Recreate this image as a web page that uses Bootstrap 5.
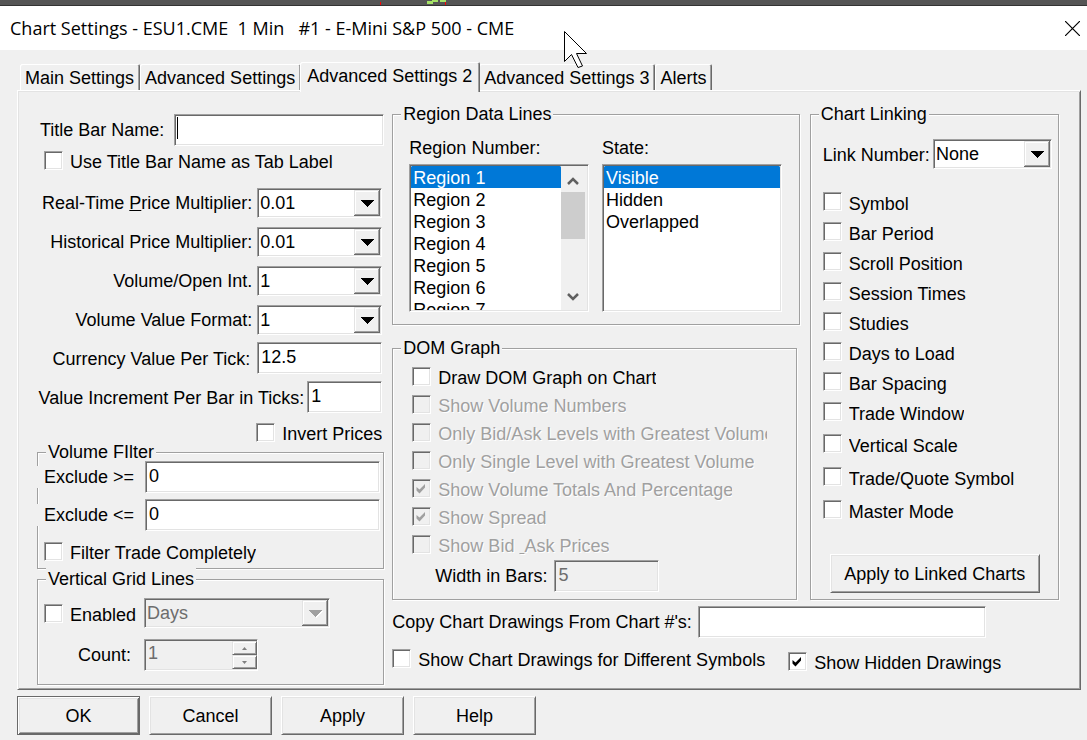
<!DOCTYPE html>
<html lang="en">
<head>
<meta charset="utf-8">
<meta name="viewport" content="width=device-width, initial-scale=1">
<title>Chart Settings</title>
<link href="https://cdn.jsdelivr.net/npm/bootstrap@5.3.0/dist/css/bootstrap.min.css" rel="stylesheet">
<script src="https://cdn.jsdelivr.net/npm/bootstrap@5.3.0/dist/js/bootstrap.bundle.min.js"></script>
<style>
  :root { --face: #f0f0f0; --lite: #e3e3e3; --shade: #a0a0a0; --dark: #696969; }
  body { background: var(--face); color: #000; font: 18px/22px "Liberation Sans", Arial, sans-serif; min-height: 100vh; }
  label, legend, button { white-space: nowrap; }

  /* window chrome */
  .backdrop-strip { height: 6px; background: #555; border-bottom: 1px solid #333; }
  .backdrop-strip svg { display: block; margin-left: 380px; }
  .title-bar { height: 44px; background: #fff; padding: 0 7px 0 10px; }
  .title-bar h1 { font: 18px/44px "Open Sans", sans-serif; white-space: pre; }
  .close-btn { border: 0; background: none; padding: 0; line-height: 0; }
  .pointer { left: 51.9%; top: 30px; z-index: 5; }
  .dialog { padding: 12px 6px 6px 17px; }

  /* tabs */
  .tab-strip { padding-left: 3px; }
  .tab-btn { background: var(--face); border: 0; height: 26px; padding: 2px 6px 0 5px; line-height: 22px;
    border-radius: 2px 2px 0 0; box-shadow: inset 1px 1px #fff, inset -1px 0 var(--dark), inset -2px 0 var(--shade); }
  .tab-btn.active { position: relative; z-index: 1; height: 30px; margin: 0 -1px -2px; padding: 3px 8px 5px 7px; }
  .panel { border: 1px solid; border-color: #fff var(--dark) var(--dark) #fff; padding: 12px 21px 4px 19px;
    box-shadow: inset 1px 1px var(--lite), inset -1px -1px var(--shade); }
  .settings-grid { display: grid; grid-template-columns: minmax(0, 347fr) minmax(0, 407fr) minmax(0, 251fr); grid-template-rows: auto 1fr; column-gap: 8px; }
  .col-left { grid-row: 1 / 3; padding-top: 11px; }
  .col-foot { grid-column: 2 / 4; }

  /* etched group boxes */
  .group { border: 1px solid var(--shade); box-shadow: inset 1px 1px #fff, 1px 1px #fff; }
  .group legend { float: none; width: auto; margin: 0 0 0 8px; padding: 0 2px; font-size: 18px; line-height: 22px; background: var(--face); }
  .col-left .group { margin-top: -1px; }

  /* sunken fields */
  .field { font: inherit; color: #000; background-color: #fff; border: 1px solid; border-color: var(--shade) #fff #fff var(--shade);
    border-radius: 0; box-shadow: inset 1px 1px var(--dark), inset -1px -1px var(--lite); min-width: 0; outline: 0; }
  input.field { height: 32px; padding: 3px 3px 5px; }
  .field:disabled, .field.off { background-color: var(--face); color: #6d6d6d; opacity: 1; }
  .caret-shown { background-image: linear-gradient(#000, #000); background-repeat: no-repeat; background-size: 1px 22px; background-position: 2px 2px; }
  .drop { appearance: none; height: 30px; padding: 1px 30px 1px 2px; background-repeat: no-repeat; background-position: right 1px center;
    background-image: url("data:image/svg+xml,%3Csvg xmlns='http://www.w3.org/2000/svg' width='26' height='26' shape-rendering='crispEdges'%3E%3Cpath fill='%23696969' d='M0 0h26v26H0z'/%3E%3Cpath fill='%23e3e3e3' d='M0 0h25v25H0z'/%3E%3Cpath fill='%23a0a0a0' d='M1 1h24v24H1z'/%3E%3Cpath fill='%23fff' d='M1 1h23v23H1z'/%3E%3Cpath fill='%23f0f0f0' d='M2 2h22v22H2z'/%3E%3Cpath d='M7 10h13l-6.500 7z'/%3E%3C/svg%3E"); }
  .drop:disabled { background-image: url("data:image/svg+xml,%3Csvg xmlns='http://www.w3.org/2000/svg' width='26' height='26' shape-rendering='crispEdges'%3E%3Cpath fill='%23696969' d='M0 0h26v26H0z'/%3E%3Cpath fill='%23e3e3e3' d='M0 0h25v25H0z'/%3E%3Cpath fill='%23a0a0a0' d='M1 1h24v24H1z'/%3E%3Cpath fill='%23fff' d='M1 1h23v23H1z'/%3E%3Cpath fill='%23f0f0f0' d='M2 2h22v22H2z'/%3E%3Cpath fill='%23fff' d='M8 11h13l-6.500 7z'/%3E%3Cpath fill='%23a0a0a0' d='M7 10h13l-6.500 7z'/%3E%3C/svg%3E"); }

  /* check boxes */
  .tick { height: 19px; line-height: 22px; gap: 7px; display: flex; align-items: flex-start; }
  .tick input { appearance: none; flex: none; width: 19px; height: 19px; margin: 0; background: #fff left top/18px no-repeat; border: 1px solid;
    border-color: var(--shade) #fff #fff var(--shade); box-shadow: inset 1px 1px var(--dark), inset -1px -1px var(--lite); }
  .tick input:checked { background-image: url("data:image/svg+xml,%3Csvg xmlns='http://www.w3.org/2000/svg' width='18' height='18'%3E%3Cpath d='M3.500 7v3.500L6.500 13.500l5.500-6V4L6.500 9.500z'/%3E%3C/svg%3E"); }
  .tick input:disabled { background-color: var(--face); }
  .tick input:disabled:checked { background-image: url("data:image/svg+xml,%3Csvg xmlns='http://www.w3.org/2000/svg' width='18' height='18'%3E%3Cpath fill='%23a0a0a0' d='M3.500 7v3.500L6.500 13.500l5.500-6V4L6.500 9.500z'/%3E%3C/svg%3E"); }
  .tick input:disabled + label { color: var(--shade); text-shadow: 1px 1px #fff; }
  .tick label { overflow: hidden; }

  /* raised buttons */
  .push { background: var(--face); border: 1px solid; border-color: #fff var(--dark) var(--dark) #fff; border-radius: 0; color: #000;
    box-shadow: inset 1px 1px var(--lite), inset -1px -1px var(--shade); height: 39px; padding: 0; }
  .push.default { border-color: var(--dark); box-shadow: inset 1px 1px #fff, inset -1px -1px var(--dark), inset 2px 2px var(--lite), inset -2px -2px var(--shade); }
  .actions { gap: 9px; padding-top: 6px; }
  .actions .push { width: 123px; }

  /* left column */
  .title-row { gap: 10px; }
  .title-field { width: 210px; }
  .as-tab { margin: 5px 0 0 7px; }
  .num-rows { gap: 9px; margin-top: 18px; padding-right: 2px; }
  .num-rows > div, .value-rows > div { display: flex; justify-content: flex-end; align-items: center; gap: 5px; }
  .value-rows { gap: 7px; margin-top: 7px; padding-right: 2px; }
  .value-rows > div { gap: 3px; }
  .value-rows label { padding-top: 2px; }
  .w-num { width: 125px; }
  .w-short { width: 75px; }
  .invert-row { margin-top: 10px; padding-right: 2px; }
  .filter-body { margin-top: -2px; padding: 0 3px 7px 0; }
  .filter-body .range { display: flex; align-items: center; margin-bottom: 6px; margin-left: -1px; }
  .filter-body .tick { margin: 11px 0 0 6px; }
  .range label { width: 110px; padding-left: 7px; background: var(--face); }
  .grid-body { padding: 8px 53px 13px 6px; }
  .lead-cell { width: 100px; flex: none; }
  .spin-line { margin-top: 11px; }
  .spin-line label { padding-right: 13px; }
  .spin { width: 114px; height: 32px; padding: 1px; }
  .spin input { border: 0; background: none; color: #6d6d6d; font: inherit; width: 86px; padding: 1px 2px 5px; appearance: textfield; }
  .spin button { width: 25px; height: 14px; padding: 0; line-height: 0; background: var(--face); border: 1px solid; border-color: var(--lite) var(--dark) var(--dark) var(--lite);
    box-shadow: inset 1px 1px #fff, inset -1px -1px var(--shade); }

  /* list boxes */
  .lists { gap: 13px; padding: 12px 17px 12px 16px; }
  .listing { height: 148px; padding: 1px; margin-top: 5px; }
  .listing select { appearance: none; flex: 1; min-width: 0; height: 144px; border: 0; padding: 0; font: inherit; background: none; overflow: hidden; outline: 0; }
  .listing option { font: 18px/20px "Liberation Sans", Arial, sans-serif; min-height: 22px; height: 22px; padding: 2px 2px 0; }
  .listing option:checked { background: #0078d7 linear-gradient(#0078d7, #0078d7); color: #fff; -webkit-text-fill-color: #fff; }
  .scroller { width: 26px; padding-right: 2px; background: var(--face); }
  .scroller svg { display: block; flex: none; }
  .scroller-thumb { height: 47px; background: #cdcdcd; }

  .dom { margin: 12px 3px 0 0; }
  .dom-body { padding: 8px 28px 7px 19px; }
  .dom-list { gap: 9px; }
  .clip-wide label { max-width: 329px; }
  .clip-tight label { max-width: 294px; }
  .bars-line { gap: 7px; margin-top: 6px; padding-left: 23px; }
  .w-bars { width: 105px; }

  .link-group { margin-left: 2px; }
  .link-body { padding: 14px 6px 6px 12px; }
  .link-body label { padding-top: 1px; }
  .link-select { width: 119px; }
  .link-list { gap: 11px; margin-top: 23px; }
  .link-list-wide { gap: 14px; margin-top: 13px; }
  .apply-linked { margin: 35px 12px 0 7px; width: 210px; }

  .foot-line { gap: 6px; margin-top: 6px; }
  .foot-line .field { width: 288px; }
  .foot-ticks { gap: 23px; height: 22px; margin-top: 11px; }
</style>
</head>
<body>
<div class="backdrop-strip">
  <svg width="70" height="5" viewBox="0 0 70 5" shape-rendering="crispEdges" aria-hidden="true">
    <path fill="#f00" d="M0 2h1v3H0zM65 2h1v3h-1z"/><path fill="#a5e266" d="M47 1h6v3h-6zM52 0h6v2h-6zM60 0h6v2h-6z"/>
  </svg>
</div>
<header class="title-bar d-flex justify-content-between align-items-center">
  <h1 class="m-0">Chart Settings - ESU1.CME  1 Min   #1 - E-Mini S&amp;P 500 - CME</h1>
  <button class="close-btn" type="button" aria-label="Close">
    <svg width="15" height="15" viewBox="0 0 15 15"><path d="M0 0l15 15M15 0L0 15" stroke="#000" stroke-width="1.200"/></svg>
  </button>
</header>
<svg class="pointer position-absolute" width="24" height="38" viewBox="0 0 24 38" aria-hidden="true">
  <path d="M.5 1.500v30l7-7L14 37.500l4.500-1.500L12.500 23.500H22.500z" fill="#fff" stroke="#000"/>
</svg>

<main class="dialog">
  <div class="tab-strip d-flex align-items-end" role="tablist">
    <button class="tab-btn" type="button" role="tab">Main Settings</button>
    <button class="tab-btn" type="button" role="tab">Advanced Settings</button>
    <button class="tab-btn active" type="button" role="tab" aria-selected="true">Advanced Settings 2</button>
    <button class="tab-btn" type="button" role="tab">Advanced Settings 3</button>
    <button class="tab-btn" type="button" role="tab">Alerts</button>
  </div>

  <div class="panel">
    <div class="settings-grid">

      <div class="col-left">
        <div class="title-row d-flex justify-content-end align-items-center">
          <label for="tname">Title Bar Name:</label><input id="tname" class="field title-field caret-shown" type="text">
        </div>
        <div class="tick as-tab"><input type="checkbox" id="tablabel"><label for="tablabel">Use Title Bar Name as Tab Label</label></div>

        <div class="num-rows d-flex flex-column">
          <div><label for="rt">Real-Time <u>P</u>rice Multiplier:</label><select id="rt" class="field drop w-num"><option>0.01</option></select></div>
          <div><label for="hist">Historical Price Multiplier:</label><select id="hist" class="field drop w-num"><option>0.01</option></select></div>
          <div><label for="voi">Volume/Open Int.</label><select id="voi" class="field drop w-num"><option>1</option></select></div>
          <div><label for="vvf">Volume Value Format:</label><select id="vvf" class="field drop w-num"><option>1</option></select></div>
        </div>
        <div class="value-rows d-flex flex-column">
          <div><label for="cvt">Currency Value Per Tick:</label><input id="cvt" class="field w-num ms-1" type="text" value="12.5"></div>
          <div><label for="vib">Value Increment Per Bar in Ticks:</label><input id="vib" class="field w-short" type="text" value="1"></div>
        </div>
        <div class="tick invert-row justify-content-end"><input type="checkbox" id="invert"><label for="invert">Invert Prices</label></div>

        <fieldset class="group">
          <legend>Volume FIlter</legend>
          <div class="filter-body">
            <div class="range"><label for="exmin">Exclude &gt;=</label><input id="exmin" class="field flex-grow-1" type="text" value="0"></div>
            <div class="range"><label for="exmax">Exclude &lt;=</label><input id="exmax" class="field flex-grow-1" type="text" value="0"></div>
            <div class="tick"><input type="checkbox" id="ftc"><label for="ftc">Filter Trade Completely</label></div>
          </div>
        </fieldset>

        <fieldset class="group">
          <legend>Vertical Grid Lines</legend>
          <div class="grid-body">
            <div class="d-flex align-items-center">
              <div class="tick lead-cell"><input type="checkbox" id="vgl"><label for="vgl">Enabled</label></div>
              <select class="field drop flex-grow-1" aria-label="Grid line unit" disabled><option>Days</option></select>
            </div>
            <div class="spin-line d-flex align-items-center">
              <label class="lead-cell text-end" for="cnt">Count:</label>
              <div class="field off spin d-flex">
                <input id="cnt" type="number" value="1" disabled>
                <div class="d-flex flex-column">
                  <button type="button" disabled aria-label="Increase"><svg width="5" height="3"><path d="M0 3l2.500-3L5 3z" fill="#808080"/></svg></button>
                  <button type="button" disabled aria-label="Decrease"><svg width="5" height="3"><path d="M0 0l2.500 3L5 0z" fill="#808080"/></svg></button>
                </div>
              </div>
            </div>
          </div>
        </fieldset>
      </div>

      <div class="col-mid">
        <fieldset class="group">
          <legend>Region Data Lines</legend>
          <div class="lists d-flex">
            <div class="flex-fill w-50">
              <label for="rnum" class="d-block">Region Number:</label>
              <div class="field listing d-flex">
                <select id="rnum" size="6">
                  <option selected>Region 1</option><option>Region 2</option><option>Region 3</option><option>Region 4</option><option>Region 5</option><option>Region 6</option><option>Region 7</option>
                </select>
                <div class="scroller d-flex flex-column" aria-hidden="true">
                  <svg width="24" height="26" viewBox="0 0 24 26"><path d="M7 18l5-5 5 5" fill="none" stroke="#606060" stroke-width="2.500"/></svg>
                  <div class="scroller-thumb"></div>
                  <svg class="mt-auto" width="24" height="26" viewBox="0 0 24 26"><path d="M7 10l5 5 5-5" fill="none" stroke="#606060" stroke-width="2.500"/></svg>
                </div>
              </div>
            </div>
            <div class="flex-fill w-50">
              <label for="state" class="d-block">State:</label>
              <div class="field listing d-flex">
                <select id="state" size="6"><option selected>Visible</option><option>Hidden</option><option>Overlapped</option></select>
              </div>
            </div>
          </div>
        </fieldset>

        <fieldset class="group dom">
          <legend>DOM Graph</legend>
          <div class="dom-body">
            <div class="dom-list d-flex flex-column">
              <div class="tick"><input type="checkbox" id="d1"><label for="d1">Draw DOM Graph on Chart</label></div>
              <div class="tick"><input type="checkbox" id="d2" disabled><label for="d2">Show Volume Numbers</label></div>
              <div class="tick clip-wide"><input type="checkbox" id="d3" disabled><label for="d3">Only Bid/Ask Levels with Greatest Volume</label></div>
              <div class="tick"><input type="checkbox" id="d4" disabled><label for="d4">Only Single Level with Greatest Volume</label></div>
              <div class="tick clip-tight"><input type="checkbox" id="d5" checked disabled><label for="d5">Show Volume Totals And Percentage</label></div>
              <div class="tick"><input type="checkbox" id="d6" checked disabled><label for="d6">Show Spread</label></div>
              <div class="tick"><input type="checkbox" id="d7" disabled><label for="d7">Show Bid <u>&nbsp;</u>Ask Prices</label></div>
            </div>
            <div class="bars-line d-flex align-items-center">
              <label for="wbars">Width in Bars:</label><input id="wbars" class="field w-bars" type="text" value="5" disabled>
            </div>
          </div>
        </fieldset>
      </div>

      <fieldset class="group link-group">
        <legend>Chart Linking</legend>
        <div class="link-body">
          <div class="d-flex align-items-center justify-content-between">
            <label for="linkno">Link Number:</label><select id="linkno" class="field drop link-select"><option>None</option></select>
          </div>
          <div class="link-list d-flex flex-column">
            <div class="tick"><input type="checkbox" id="l1"><label for="l1">Symbol</label></div>
            <div class="tick"><input type="checkbox" id="l2"><label for="l2">Bar Period</label></div>
            <div class="tick"><input type="checkbox" id="l3"><label for="l3">Scroll Position</label></div>
            <div class="tick"><input type="checkbox" id="l4"><label for="l4">Session Times</label></div>
            <div class="tick"><input type="checkbox" id="l5"><label for="l5">Studies</label></div>
            <div class="tick"><input type="checkbox" id="l6"><label for="l6">Days to Load</label></div>
            <div class="tick"><input type="checkbox" id="l7"><label for="l7">Bar Spacing</label></div>
            <div class="tick"><input type="checkbox" id="l8"><label for="l8">Trade Window</label></div>
          </div>
          <div class="link-list-wide d-flex flex-column">
            <div class="tick"><input type="checkbox" id="l9"><label for="l9">Vertical Scale</label></div>
            <div class="tick"><input type="checkbox" id="l10"><label for="l10">Trade/Quote Symbol</label></div>
            <div class="tick"><input type="checkbox" id="l11"><label for="l11">Master Mode</label></div>
          </div>
          <button type="button" class="push apply-linked">Apply to Linked Charts</button>
        </div>
      </fieldset>

      <div class="col-foot">
        <div class="foot-line d-flex align-items-center"><label for="copyfrom">Copy Chart Drawings From Chart #'s:</label><input id="copyfrom" class="field" type="text"></div>
        <div class="foot-ticks d-flex">
          <div class="tick"><input type="checkbox" id="f1"><label for="f1">Show Chart Drawings for Different Symbols</label></div>
          <div class="tick align-self-end"><input type="checkbox" id="f2" checked><label for="f2">Show Hidden Drawings</label></div>
        </div>
      </div>
    </div>
  </div>

  <div class="actions d-flex">
    <button type="submit" class="push default">OK</button>
    <button type="button" class="push">Cancel</button>
    <button type="button" class="push">Apply</button>
    <button type="button" class="push">Help</button>
  </div>
</main>
</body>
</html>
